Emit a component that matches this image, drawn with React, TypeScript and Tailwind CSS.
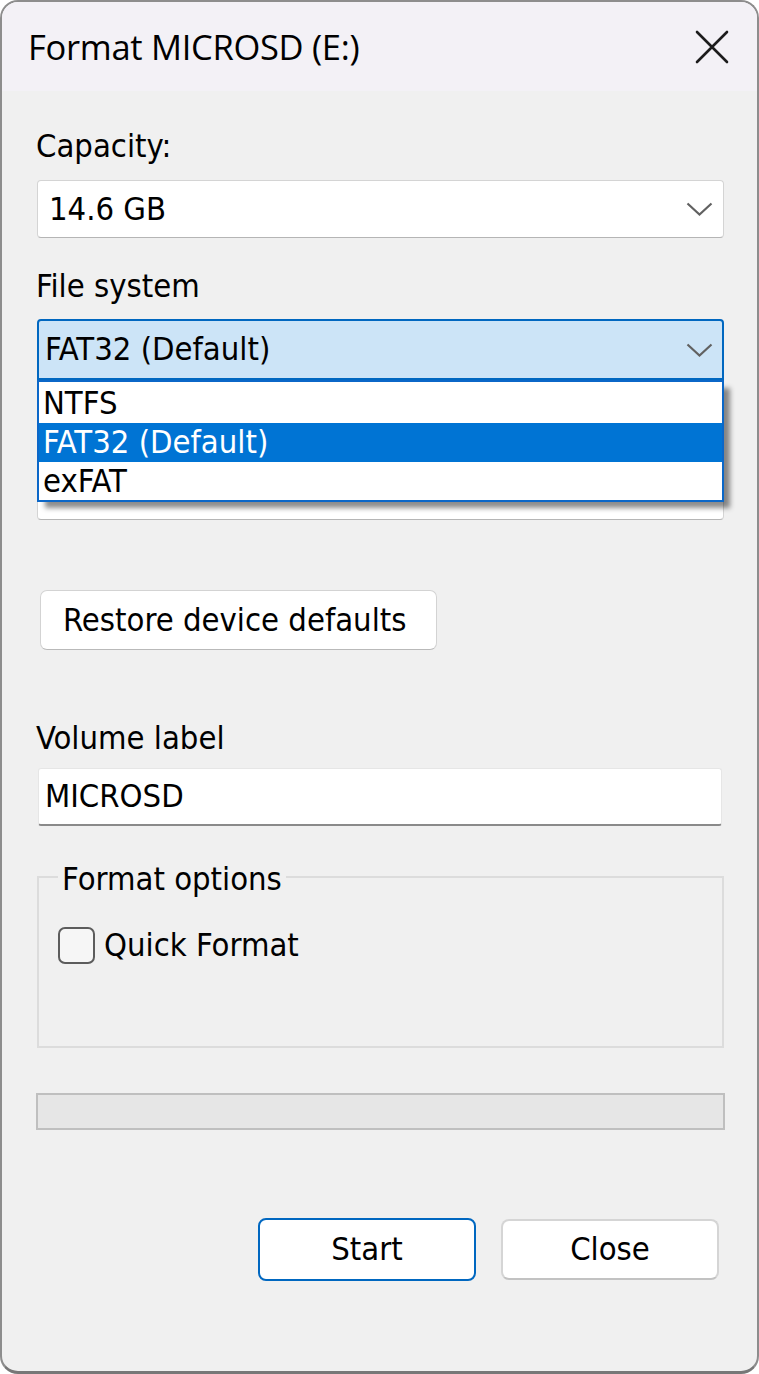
import * as React from "react";

const dlgFont = { fontFamily: '"DejaVu Sans Condensed", "DejaVu Sans", "Liberation Sans", sans-serif' };

function Chevron() {
  return (
    <svg width="27" height="14" viewBox="0 0 27 14" className="shrink-0">
      <polyline points="1.5,1.5 13.5,12.5 25.5,1.5" fill="none" stroke="#616161" strokeWidth="2.2" />
    </svg>
  );
}

function Label({ children, className = "" }: { children?: React.ReactNode; className?: string }) {
  return <div className={`h-[40px] leading-[40px] -ml-[1px] ${className}`}>{children}</div>;
}

export default function App() {
  const options = [
    { name: "NTFS", h: "h-[41px] leading-[41px] pt-[3px]" },
    { name: "FAT32 (Default)", h: "h-[39px] leading-[39px] pt-[2px]" },
    { name: "exFAT", h: "h-[38px] leading-[38px] pt-[2px]" },
  ];
  const selected = 1;

  return (
    <div className="w-[759px] h-[1374px] bg-white">
      <div className="h-full flex flex-col rounded-[18px] border-2 border-[#8d8d8d] border-b-[3px] border-b-[#777777] bg-[#f0f0f0] overflow-hidden text-[32.5px] text-black" style={dlgFont}>
        {/* Title bar */}
        <div className="h-[89px] shrink-0 flex items-center justify-between pl-[26px] pr-[28px] bg-[#f3f1f6]">
          <span className="text-[34.5px] tracking-[-0.3px]" style={{ fontFamily: '"Open Sans", "Noto Sans", sans-serif' }}>
            Format MICROSD (E:)
          </span>
          <svg width="34" height="34" viewBox="0 0 34 34">
            <path d="M2 2 L32 32 M32 2 L2 32" stroke="#1c1c1c" strokeWidth="2.6" strokeLinecap="round" />
          </svg>
        </div>

        {/* Body */}
        <div className="flex-1 flex flex-col pl-[35px] pr-[33px] pt-[35px]">
          <Label>Capacity:</Label>
          <div className="mt-[14px] h-[58px] flex items-center justify-between pl-[11px] pr-[10px] bg-white border border-[#d4d4d4] border-b-[#b5b5b5] rounded-[4px]">
            <span>14.6 GB</span>
            <Chevron />
          </div>

          <Label className="mt-[28px]">File system</Label>
          <div className="relative mt-[13px]">
            <div className="h-[61px] flex items-center justify-between pl-[6px] pr-[9px] bg-[#cce4f7] border-2 border-[#0067c0] rounded-t-[4px]">
              <span>FAT32 (Default)</span>
              <Chevron />
            </div>
            {/* Open dropdown list */}
            <div className="absolute left-0 right-0 top-full z-10 bg-white border-2 border-[#0b67c8] shadow-[7px_7px_5px_-1px_rgba(0,0,0,0.45)]">
              {options.map((o, i) => (
                <div key={o.name} className={`${o.h} box-border pl-[4px] ${i === selected ? "bg-[#0074d4] text-white" : ""}`}>
                  <div className="-mt-[2px]">{o.name}</div>
                </div>
              ))}
            </div>
          </div>

          {/* Allocation unit size row, hidden behind the open list */}
          <Label className="mt-[26px]" />
          <div className="mt-[15px] h-[59px] bg-white border border-[#d4d4d4] border-b-[#b5b5b5] rounded-[4px]" />

          <button className="mt-[70px] ml-[3px] w-[397px] h-[60px] bg-white border border-[#d3d3d3] border-b-[#b9b9b9] rounded-[7px] text-left pl-[22px]">
            Restore device defaults
          </button>

          <Label className="mt-[68px]">Volume label</Label>
          <div className="mt-[10px] ml-[1px] mr-[2px] h-[58px] flex items-center pl-[6px] bg-white border border-[#e6e6e6] border-b-2 border-b-[#8a8a8a] rounded-[3px]">
            MICROSD
          </div>

          <div className="relative mt-[50px] h-[172px] border-2 border-[#dcdcdc]">
            <span className="absolute -top-[19px] left-[19px] px-[4px] bg-[#f0f0f0] leading-[40px]">Format options</span>
            <label className="absolute left-[19px] top-[47px] flex items-center gap-[9px]">
              <span className="w-[37px] h-[37px] rounded-[7px] border-2 border-[#5c5c5c] bg-[#f6f6f6]" />
              <span className="leading-[40px]">Quick Format</span>
            </label>
          </div>

          <div className="mt-[45px] -mx-[1px] h-[37px] bg-[#e6e6e6] border-2 border-[#bfbfbf]" />

          <div className="mt-[88px] flex justify-end gap-[25px] pr-[5px]">
            <button className="w-[218px] h-[63px] bg-white border-2 border-[#0067c0] rounded-[8px]">Start</button>
            <button className="w-[218px] h-[61px] mt-[1px] bg-white border-2 border-[#d5d5d5] border-b-[#c2c2c2] rounded-[8px]">Close</button>
          </div>
        </div>
      </div>
    </div>
  );
}
